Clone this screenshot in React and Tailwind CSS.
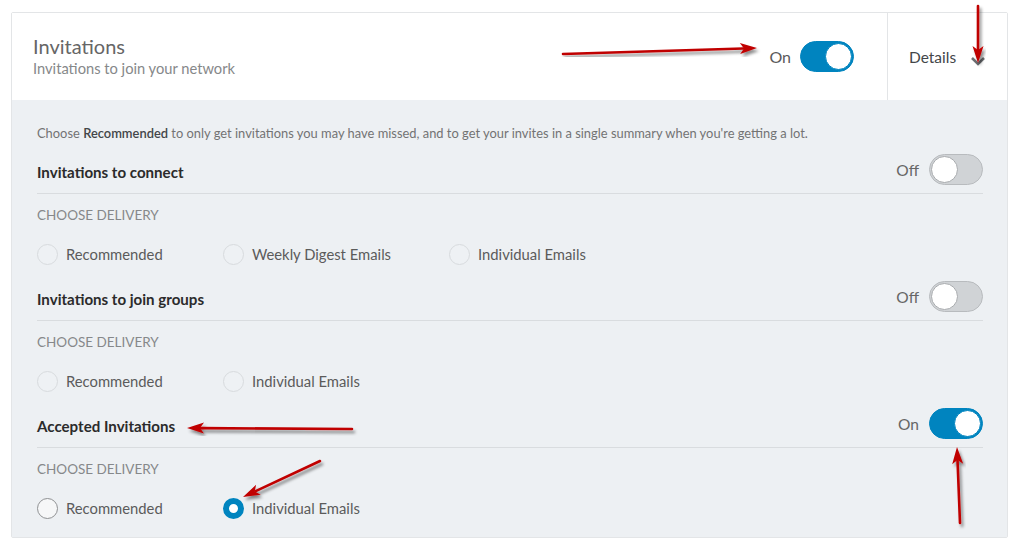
import { useState } from 'react'

const font = { fontFamily: 'Lato, "Source Sans Pro", "Open Sans", sans-serif' }

function Toggle({ on, onChange }) {
  return (
    <button
      onClick={onChange}
      className={`relative h-[31px] w-[54px] rounded-full border cursor-pointer transition-colors ${
        on ? 'bg-[#0084bf] border-[#0084bf]' : 'bg-[#d0d3d6] border-[#b8bbbe]'
      }`}
    >
      <span
        className={`absolute top-[1px] h-[27px] w-[27px] rounded-full bg-white border ${
          on ? 'right-[1px] border-[#0084bf]' : 'left-[1px] border-[#a8abae]'
        }`}
      />
    </button>
  )
}

function Radio({ label, checked, strong, onSelect }) {
  return (
    <label className="flex items-center gap-[8px] cursor-pointer" onClick={onSelect}>
      <span
        className={`h-[21px] w-[21px] rounded-full ${
          checked
            ? 'border-[6px] border-[#0084bf] bg-white'
            : strong
              ? 'border border-[#8f9193] bg-[#f6f7f8]'
              : 'border border-[#d8dbde] bg-[#eef1f4]'
        }`}
      />
      <span className="text-[14.8px] text-[#5b5b5b]">{label}</span>
    </label>
  )
}

function Section({ title, on, onToggle, options, value, onSelect, last }) {
  return (
    <div className={last ? '' : 'mb-[14px]'}>
      <div className="flex items-center justify-between h-[42px] border-b border-[#d9dcdf]">
        <span className="text-[15.1px] font-bold text-[#2b2b2b]">{title}</span>
        <div className="flex items-center gap-[10px] pb-[7px]">
          <span className="text-[15.5px] text-[#666] pt-[3px]">{on ? 'On' : 'Off'}</span>
          <Toggle on={on} onChange={onToggle} />
        </div>
      </div>
      <div className="mt-[11px] h-[20px] text-[13.5px] text-[#86888a] leading-[20px]">CHOOSE DELIVERY</div>
      <div className="mt-[18px] flex items-center h-[22px]">
        {options.map((o) => (
          <div key={o.label} style={{ width: o.w }}>
            <Radio label={o.label} checked={value === o.label} strong={on} onSelect={() => onSelect(o.label)} />
          </div>
        ))}
      </div>
    </div>
  )
}

// red callout arrow with a soft shadow
function Arrow({ x1, y1, x2, y2 }) {
  const dx = x2 - x1
  const dy = y2 - y1
  const len = Math.hypot(dx, dy)
  const ux = dx / len
  const uy = dy / len
  const hl = 17
  const hw = 5.5
  const bx = x2 - ux * hl
  const by = y2 - uy * hl
  const pts = `${x2},${y2} ${bx - uy * hw},${by + ux * hw} ${bx + ux * 4},${by + uy * 4} ${bx + uy * hw},${by - ux * hw}`
  return (
    <g filter="url(#arrowShadow)">
      <line x1={x1} y1={y1} x2={bx + ux * 3} y2={by + uy * 3} stroke="#c00000" strokeWidth="2.6" strokeLinecap="round" />
      <polygon points={pts} fill="#c00000" />
    </g>
  )
}

export default function App() {
  const [master, setMaster] = useState(true)
  const [connect, setConnect] = useState(false)
  const [groups, setGroups] = useState(false)
  const [accepted, setAccepted] = useState(true)
  const [connectVal, setConnectVal] = useState(null)
  const [groupsVal, setGroupsVal] = useState(null)
  const [acceptedVal, setAcceptedVal] = useState('Individual Emails')

  return (
    <div className="relative w-[1024px] h-[552px] bg-white pt-3 pl-[11px] overflow-hidden" style={font}>
      <div className="w-[997px] border border-[#e3e5e7] rounded-[2px]">
        {/* header */}
        <div className="flex h-[87px] bg-white">
          <div className="flex-1 flex flex-col justify-center pl-[21px] pb-[2px]">
            <div className="text-[20px] text-[#666] leading-[24px]">Invitations</div>
            <div className="text-[14.7px] text-[#86888a] leading-[20px]">Invitations to join your network</div>
          </div>
          <div className="flex items-center gap-[9px] pr-[33px]">
            <span className="text-[16px] text-[#5a5a5a]">On</span>
            <Toggle on={master} onChange={() => setMaster(!master)} />
          </div>
          <div className="w-[120px] border-l border-[#e3e5e7] flex items-center pl-[21px] gap-[14px]">
            <span className="text-[15.5px] text-[#434649] pt-[3px]">Details</span>
            <svg width="16" height="10" viewBox="0 0 16 10" className="mt-[8px]">
              <path d="M2 2 L8 8 L14 2" fill="none" stroke="#6b6e71" strokeWidth="2.6" />
            </svg>
          </div>
        </div>

        {/* body */}
        <div className="bg-[#edf0f3] pl-[25px] pr-[24px] pt-[24px] pb-[18px]">
          <p className="text-[12.9px] leading-[18px] text-[#737373] mb-[10px]">
            Choose <span className="text-[#434649] font-semibold">Recommended</span> to only get invitations you may
            have missed, and to get your invites in a single summary when you're getting a lot.
          </p>
          <Section
            title="Invitations to connect"
            on={connect}
            onToggle={() => setConnect(!connect)}
            options={[
              { label: 'Recommended', w: 186 },
              { label: 'Weekly Digest Emails', w: 226 },
              { label: 'Individual Emails', w: 200 },
            ]}
            value={connectVal}
            onSelect={setConnectVal}
          />
          <Section
            title="Invitations to join groups"
            on={groups}
            onToggle={() => setGroups(!groups)}
            options={[
              { label: 'Recommended', w: 186 },
              { label: 'Individual Emails', w: 200 },
            ]}
            value={groupsVal}
            onSelect={setGroupsVal}
          />
          <Section
            title="Accepted Invitations"
            on={accepted}
            onToggle={() => setAccepted(!accepted)}
            options={[
              { label: 'Recommended', w: 186 },
              { label: 'Individual Emails', w: 200 },
            ]}
            value={acceptedVal}
            onSelect={setAcceptedVal}
            last
          />
        </div>
      </div>

      <svg className="absolute inset-0 pointer-events-none" width="1024" height="552">
        <defs>
          <filter id="arrowShadow" x="-20%" y="-20%" width="140%" height="140%">
            <feDropShadow dx="2" dy="3" stdDeviation="1.6" floodColor="#000" floodOpacity="0.45" />
          </filter>
        </defs>
        <Arrow x1={563} y1={54} x2={757} y2={48} />
        <Arrow x1={978} y1={6} x2={978} y2={63} />
        <Arrow x1={352} y1={429} x2={187} y2={428} />
        <Arrow x1={320} y1={461} x2={243} y2={497} />
        <Arrow x1={960} y1={523} x2={957} y2={447} />
      </svg>
    </div>
  )
}
